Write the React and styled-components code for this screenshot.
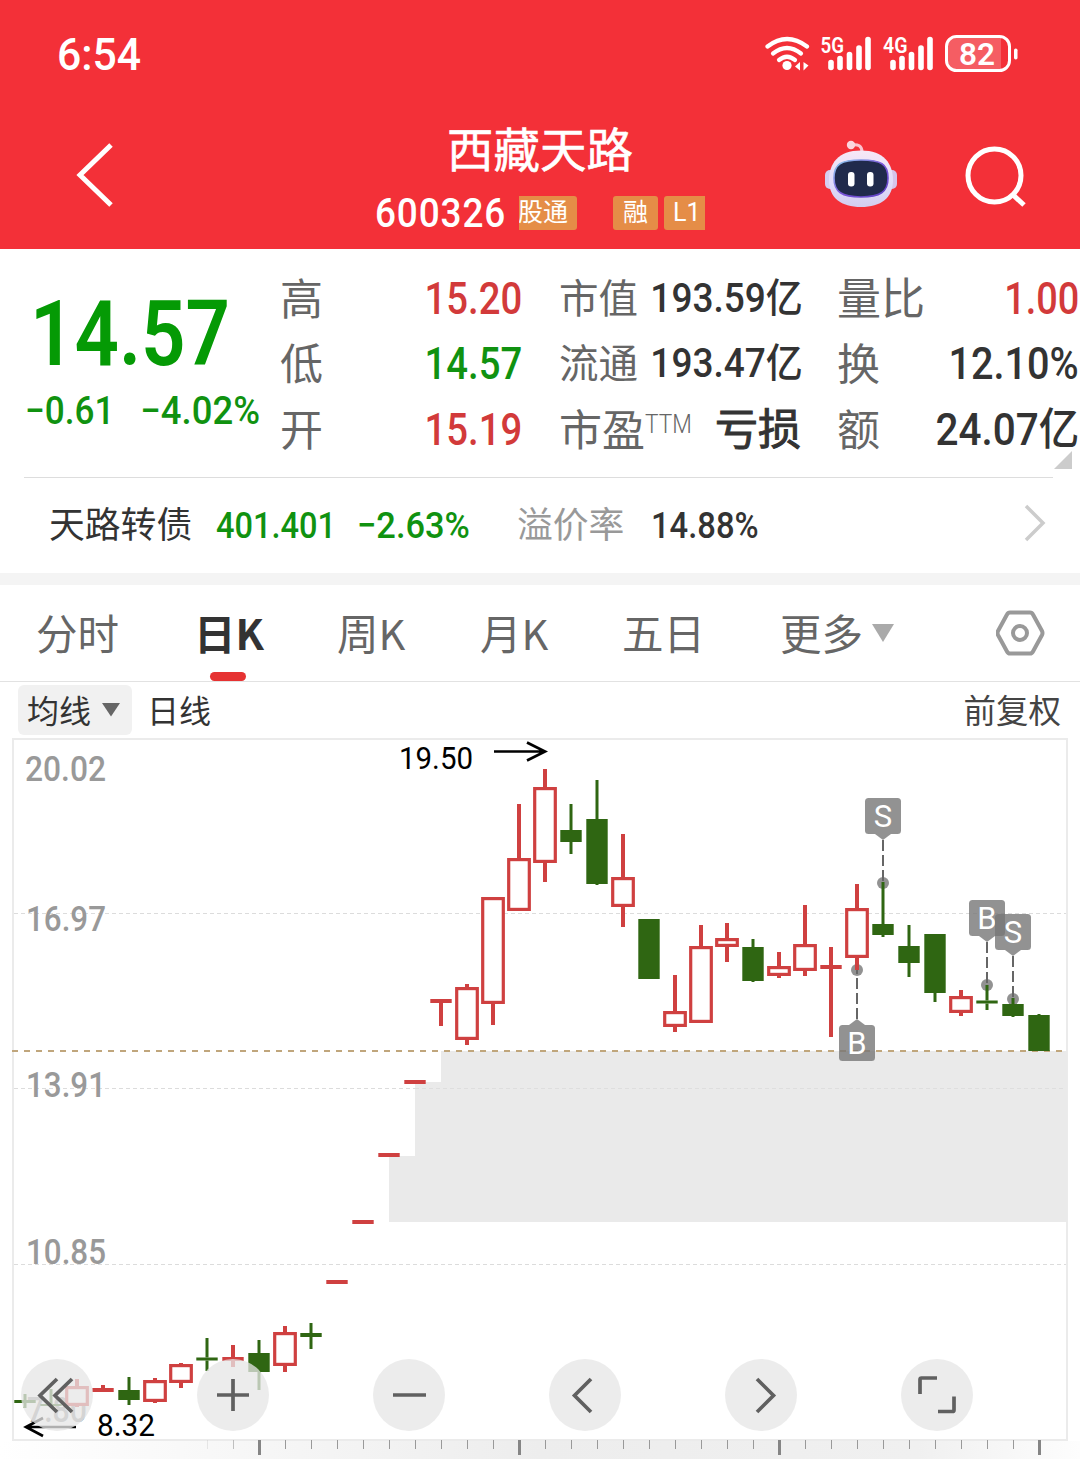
import styled, { createGlobalStyle } from "styled-components";

const GlobalStyle = createGlobalStyle`
  * {
    box-sizing: border-box;
  }

  body {
    margin: 0;
    background: #fff;
    font-family: Roboto, "Noto Sans CJK SC", sans-serif;
    color: #333;
  }
`;

const Page = styled.div`
  width: 1080px;
  height: 1459px;
  overflow: hidden;
  background: #fff;
`;

const Header = styled.header`
  height: 249px;
  background: #f33038;
  color: #fff;
`;

const StatusBar = styled.div`
  display: flex;
  align-items: center;
  justify-content: space-between;
  height: 108px;
  padding: 0 60px 0 57px;
`;

const Figure = styled.span`
  display: inline-block;
  font-family: Roboto, "Noto Sans CJK SC", sans-serif;
  font-size: ${(p) => p.$size}px;
  font-weight: ${(p) => p.$weight || 500};
  line-height: 1;
  color: ${(p) => p.$color || "inherit"};
  letter-spacing: ${(p) => p.$spacing || 0}px;
  white-space: nowrap;
  transform: scaleX(${(p) => p.$squeeze || 1});
  transform-origin: ${(p) => p.$origin || "left"} center;
`;

const TitleBar = styled.div`
  display: grid;
  grid-template-columns: 375px 330px 375px;
  height: 141px;
`;

const BackButton = styled.div`
  padding: 34px 0 0 75px;
`;

const TitleBlock = styled.div`
  display: flex;
  flex-direction: column;
  align-items: center;
`;

const StockName = styled.h1`
  margin: 16px 0 0;
  font-size: 46.5px;
  font-weight: 400;
  line-height: 54px;
  -webkit-text-stroke: 0.6px currentColor;
`;

const CodeRow = styled.div`
  display: flex;
  align-items: center;
  width: 330px;
  height: 34px;
  margin-top: 18px;
`;

const Code = styled.div`
  width: 144px;
`;

const Tag = styled.span`
  display: flex;
  align-items: center;
  justify-content: ${(p) => p.$align || "center"};
  width: ${(p) => p.$width}px;
  height: 34px;
  margin-right: ${(p) => p.$gap || 0}px;
  border-radius: ${(p) => p.$radius || "3px"};
  overflow: hidden;
  background: #e58d47;
  font-size: 25px;
  line-height: 34px;
  white-space: nowrap;
`;

const TagText = styled.span`
  margin-left: ${(p) => p.$shift || 0}px;
`;

const HeaderActions = styled.div`
  display: flex;
  gap: 66px;
  padding: 30px 0 0 119px;
`;

const Quote = styled.section`
  display: flex;
  height: 228px;
`;

const PricePanel = styled.div`
  width: 280px;
  padding: 41px 0 0 30px;
`;

const PriceMain = styled.div`
  height: 88px;
`;

const PriceChange = styled.div`
  display: flex;
  width: 235px;
  margin-top: 14px;
  margin-left: -5px;
  justify-content: space-between;
`;

const StatColumn = styled.div`
  display: flex;
  flex-direction: column;
  width: 242px;
  margin-right: ${(p) => p.$gap}px;
  padding-top: 17px;
`;

const StatRow = styled.div`
  display: flex;
  align-items: center;
  justify-content: space-between;
  height: 65.5px;
`;

const StatLabel = styled.span`
  padding-top: 2px;
  font-size: ${(p) => p.$size || 43}px;
  line-height: 58px;
  color: #666;
  white-space: nowrap;
`;

const Ttm = styled.sup`
  display: inline-block;
  width: 46px;
  font-size: 26px;
  font-weight: 300;
  line-height: 1;
  vertical-align: 13px;
  transform: scaleX(0.87);
  transform-origin: left;
`;

const StatText = styled.span`
  font-size: 43px;
  line-height: 60px;
  -webkit-text-stroke: 1px currentColor;
`;

const Divider = styled.div`
  position: relative;
  width: 1029px;
  height: 1px;
  margin-left: 24px;
  background: #ddd;
`;

const Corner = styled.svg`
  position: absolute;
  right: -19px;
  bottom: 9px;
`;

const BondRow = styled.section`
  display: flex;
  align-items: center;
  height: 95px;
  padding-left: 49px;
`;

const BondCell = styled.div`
  width: ${(p) => p.$width}px;
  flex: none;
  font-size: 35.8px;
  line-height: 50px;
  color: ${(p) => p.$color || "#333"};
  white-space: nowrap;
`;

const BondArrow = styled.svg`
  margin-bottom: 5px;
`;

const Band = styled.div`
  height: 12px;
  background: #f4f4f4;
`;

const Tabs = styled.nav`
  display: flex;
  height: 97px;
  padding-left: 36px;
  border-bottom: 1px solid #e2e2e2;
`;

const Tab = styled.div`
  position: relative;
  display: flex;
  align-items: center;
  width: ${(p) => p.$width}px;
  padding-bottom: 3px;
  font-family: "Noto Sans CJK SC", sans-serif;
  font-size: 41.5px;
  font-weight: ${(p) => (p.$active ? 700 : 400)};
  color: ${(p) => (p.$active ? "#333" : "#666")};
  white-space: nowrap;

  svg {
    margin-top: 2px;
    margin-left: 8px;
  }
`;

const TabIndicator = styled.span`
  position: absolute;
  left: 16px;
  bottom: 0;
  width: 36px;
  height: 9px;
  border-radius: 4.5px;
  background: #e63232;
`;

const ChartToolbar = styled.div`
  display: flex;
  align-items: center;
  height: 56px;
  padding: 0 19px 0 18px;
  font-size: 32px;
  line-height: 46px;
`;

const ToolbarText = styled.span`
  padding-top: 3px;
`;

const MaButton = styled.div`
  display: flex;
  align-items: center;
  gap: 11px;
  width: 114px;
  height: 50px;
  margin-right: 15px;
  padding-left: 9px;
  border-radius: 6px;
  background: #f1f1f1;
`;

const Adjust = styled(ToolbarText)`
  margin-left: auto;
  font-size: 32.5px;
  color: #444;
`;

const ChartArea = styled.div`
  position: relative;
  height: 721px;

  > svg {
    display: block;
  }
`;

const Controls = styled.div`
  position: absolute;
  left: 21px;
  top: 621px;
  display: flex;
  gap: 104px;
`;

const RoundButton = styled.div`
  width: 72px;
  height: 72px;
  border-radius: 50%;
  background: rgba(230, 230, 230, 0.76);
`;

const RED = "#cf4040";
const GREEN = "#2f6612";
const UP = "#d23a3a";
const DOWN = "#109210";

// [type, high, top, bottom, low], drawn every 26px from the left
const candles = [
  ["g", 1394, 1400, 1403, 1408],
  ["g", 1389, 1404, 1406, 1406],
  ["r", 1379, 1386, 1406, 1407],
  ["f", 1385, 1388, 1392, 1392],
  ["g", 1377, 1390, 1400, 1405],
  ["r", 1378, 1380, 1402, 1403],
  ["r", 1363, 1364, 1383, 1388],
  ["g", 1338, 1357.5, 1360.5, 1371],
  ["f", 1345, 1357, 1361, 1367],
  ["g", 1340, 1353, 1372, 1390],
  ["r", 1326, 1332, 1366, 1372],
  ["g", 1323, 1333, 1337, 1349],
  ["f", 1280, 1280, 1284, 1284],
  ["f", 1220, 1220, 1224, 1224],
  ["f", 1153, 1153, 1157, 1157],
  ["f", 1080, 1080, 1084, 1084],
  ["f", 999, 999, 1003, 1026],
  ["r", 984, 987, 1040, 1045],
  ["r", 897, 897, 1004, 1025],
  ["r", 804, 858, 911, 911],
  ["r", 769, 787, 863, 882],
  ["g", 804, 830, 842, 854],
  ["g", 780, 819, 884, 885],
  ["r", 834, 877, 907, 927],
  ["g", 919, 919, 979, 979],
  ["r", 975, 1011, 1027, 1032],
  ["r", 925, 946, 1023, 1023],
  ["r", 923, 938, 947, 962],
  ["g", 939, 947, 981, 982],
  ["r", 952, 966, 976, 978],
  ["r", 905, 944, 971, 976],
  ["f", 947, 965, 969, 1037],
  ["r", 884, 908, 958, 970],
  ["g", 882, 924, 935, 937],
  ["g", 925, 946, 963, 977],
  ["g", 934, 934, 993, 1002],
  ["r", 990, 996, 1013, 1016],
  ["g", 985, 1000.5, 1003.5, 1010],
  ["g", 998, 1004, 1016, 1017],
  ["g", 1014, 1015, 1051, 1051],
];

const trades = [
  { text: "S", x: 883, box: 798, dot: 883 },
  { text: "B", x: 857, box: 1025, dot: 970 },
  { text: "B", x: 987, box: 900, dot: 985 },
  { text: "S", x: 1013, box: 914, dot: 999 },
];

const priceLabels = [
  { text: "20.02", x: 25, y: 781, width: 81 },
  { text: "16.97", x: 26, y: 931, width: 80 },
  { text: "13.91", x: 26, y: 1097, width: 80 },
  { text: "10.85", x: 26, y: 1264, width: 80 },
  { text: "7.80", x: 27, y: 1422, width: 60 },
];

const Candle = ({ x, type, high, top, bottom, low }) => {
  const color = type === "g" ? GREEN : RED;
  const wick = type === "g" ? 3 : 4;
  return (
    <g>
      {high < top && (
        <rect x={x - wick / 2} y={high} width={wick} height={top - high} fill={color} />
      )}
      {low > bottom && (
        <rect x={x - wick / 2} y={bottom} width={wick} height={low - bottom} fill={color} />
      )}
      {type === "r" ? (
        <rect
          x={x - 10.3}
          y={top + 1.6}
          width="20.6"
          height={bottom - top - 3.2}
          fill="#fff"
          stroke={color}
          strokeWidth="3.2"
        />
      ) : (
        <rect x={x - 10.7} y={top} width="21.4" height={bottom - top} fill={color} />
      )}
    </g>
  );
};

const Trade = ({ text, x, box, dot }) => {
  const above = box < dot;
  const edge = above ? box + 36 : box;
  const tip = above ? edge + 6 : edge - 6;
  return (
    <g>
      <circle cx={x} cy={dot} r="6" fill="#777" fillOpacity="0.8" />
      <line x1={x} y1={tip} x2={x} y2={dot} stroke="#666" strokeWidth="2" strokeDasharray="11 4" />
      <g fill="#777" fillOpacity="0.8">
        <rect x={x - 18} y={box} width="36" height="36" rx="3.5" />
        <path d={`M${x - 8} ${edge}L${x} ${tip}L${x + 8} ${edge}Z`} />
      </g>
      <text x={x} y={box + 29} textAnchor="middle" fontSize="31" fill="#fff">
        {text}
      </text>
    </g>
  );
};

const Chart = () => (
  <svg width="1080" height="721" viewBox="0 738 1080 721" fontFamily="Roboto, sans-serif">
    <defs>
      <linearGradient id="ruler" x1="0" x2="1">
        <stop offset="0" stopColor="#fff" />
        <stop offset="0.5" stopColor="#ededed" />
        <stop offset="0.85" stopColor="#f0f0f0" />
        <stop offset="1" stopColor="#fdfdfd" />
      </linearGradient>
    </defs>
    <rect x="13" y="739" width="1054" height="701" fill="none" stroke="#ebebeb" strokeWidth="2" />
    {[913.5, 1088.5, 1264.5].map((y) => (
      <line key={y} x1="14" y1={y} x2="1066" y2={y} stroke="#dcdcdc" strokeDasharray="4 3" />
    ))}
    <path d="M441 1051H1067V1222H389V1156H415V1082H441Z" fill="#eaeaea" />
    <line x1="415" y1="1088.5" x2="1066" y2="1088.5" stroke="#dedede" strokeDasharray="4 3" />
    <line x1="12" y1="1051" x2="1066" y2="1051" stroke="#c0a67c" strokeWidth="2" strokeDasharray="6 6" />
    {priceLabels.map((l) => (
      <text
        key={l.text}
        x={l.x}
        y={l.y}
        textLength={l.width}
        lengthAdjust="spacingAndGlyphs"
        fontSize="35"
        fontWeight="500"
        fill="#999"
      >
        {l.text}
      </text>
    ))}
    {trades.map((t) => (
      <Trade key={t.x} {...t} />
    ))}
    {candles.map(([type, high, top, bottom, low], i) => (
      <Candle key={i} x={25 + i * 26} type={type} high={high} top={top} bottom={bottom} low={low} />
    ))}
    <g fontSize="31" fill="#000">
      <text x="399" y="769" textLength="74" lengthAdjust="spacingAndGlyphs">
        19.50
      </text>
      <text x="97" y="1436" textLength="58" lengthAdjust="spacingAndGlyphs">
        8.32
      </text>
    </g>
    <g fill="none" stroke="#000" strokeWidth="2.7">
      <path d="M494 751.5H545M527 742.5L545 751.5L527 760.5" />
      <path d="M76 1427H26M43 1418L26 1427L43 1436" />
    </g>
    <rect x="0" y="1441" width="1080" height="18" fill="url(#ruler)" />
    {Array.from({ length: 33 }, (_, i) => {
      const x = 207 + i * 26;
      const major = (x - 259) % 260 === 0;
      return (
        <rect
          key={x}
          x={major ? x - 1 : x}
          y="1440"
          width={major ? 3 : 1}
          height={major ? 15 : 9}
          fill={major ? "#858585" : "#999"}
          opacity={i === 0 ? 0.2 : i === 1 ? 0.6 : 1}
        />
      );
    })}
  </svg>
);

const StatusIcons = () => (
  <svg width="280" height="50" viewBox="740 29 280 50" fill="none" stroke="#fff" fontFamily="Roboto, sans-serif">
    <g strokeWidth="4.2" strokeLinecap="round">
      <path d="M767.5 46.5Q787 31.5 807 46.5" />
      <path d="M773 53.5Q787 42.5 801 53.5" />
      <path d="M779 60Q787 53.5 795 60" />
    </g>
    <circle cx="787" cy="65.500" r="4.6" fill="#fff" stroke="none" />
    <path d="M800 62V70.5L795 66.5ZM803.5 62V70.5L808.5 65.5Z" fill="#fff" stroke="none" />
    {[831, 893].map((x) => (
      <g key={x} strokeWidth="5.6" strokeLinecap="round">
        <path d={`M${x} 62.5V67.5`} />
        <path d={`M${x + 9} 58.5V67.5`} />
        <path d={`M${x + 18.5} 54.5V67.5`} />
        <path d={`M${x + 28} 48V67.5`} />
        <path d={`M${x + 37} 39.5V67.5`} />
      </g>
    ))}
    <g fill="#fff" stroke="none" fontSize="22" fontWeight="600">
      <text x="820.5" y="53" textLength="23.5" lengthAdjust="spacingAndGlyphs">
        5G
      </text>
      <text x="883" y="53" textLength="24.5" lengthAdjust="spacingAndGlyphs">
        4G
      </text>
    </g>
    <path d="M956 38H1001V69H956Q948 69 948 60V47Q948 38 956 38Z" fill="#fff" fillOpacity="0.22" stroke="none" />
    <rect x="946.5" y="36.5" width="63" height="34" rx="10" strokeWidth="3" />
    <rect x="1014" y="48.5" width="3.5" height="11" rx="1.7" fill="#fff" stroke="none" />
    <text x="959" y="65" textLength="36" lengthAdjust="spacingAndGlyphs" fontSize="32" fontWeight="600" fill="#fff" stroke="none">
      82
    </text>
  </svg>
);

const Robot = () => (
  <svg width="74" height="72" viewBox="824 138 74 72">
    <defs>
      <linearGradient id="shell" x1="0" y1="0" x2="0" y2="1">
        <stop offset="0" stopColor="#f7e8f6" />
        <stop offset="0.6" stopColor="#e0dcfa" />
        <stop offset="1" stopColor="#d3cdee" />
      </linearGradient>
      <linearGradient id="rim" x1="0" y1="0" x2="1" y2="1">
        <stop offset="0" stopColor="#8fd3f0" />
        <stop offset="0.5" stopColor="#7b55d8" />
        <stop offset="1" stopColor="#5b3fc0" />
      </linearGradient>
    </defs>
    <path d="M851 145Q862 143 862 152" fill="none" stroke="#fbc3cf" strokeWidth="3" />
    <circle cx="851" cy="145" r="4.2" fill="#fbd5de" />
    <rect x="825" y="170" width="12" height="19" rx="5" fill="#d6cdf0" />
    <rect x="885" y="170" width="12" height="19" rx="5" fill="#d6c4ea" />
    <path d="M861 150.5C884 150.5 893 164 893 180C893 198 881 207 861 207C841 207 829 198 829 180C829 164 838 150.5 861 150.5Z" fill="url(#shell)" />
    <path d="M861 160C881 160 888 164 888 178C888 192 880 197 861 197C842 197 834 192 834 178C834 164 841 160 861 160Z" fill="#202a4b" stroke="url(#rim)" strokeWidth="1.6" />
    <rect x="848" y="172" width="6.5" height="14.5" rx="3" fill="#fff" />
    <rect x="867" y="172" width="6.5" height="14.5" rx="3" fill="#fff" />
  </svg>
);

const controlPaths = [
  "M36 20L19 36.5L36 53M51 20L34 36.5L51 53",
  "M20 36H52M36 20V52",
  "M20 36H53",
  "M42 20L25.5 36.5L42 53",
  "M32 20L48.5 36.5L32 53",
  "M19 35V20.5Q19 19 20.500 19H36M53 37.5V51Q53 52.500 51.500 52.500H37",
];

const periods = [
  { label: "分时", width: 158 },
  { label: "日K", width: 143, active: true },
  { label: "周K", width: 143 },
  { label: "月K", width: 142 },
  { label: "五日", width: 158 },
  { label: "更多", width: 216, menu: true },
];

const App = () => {
  return (
    <Page>
      <GlobalStyle />
      <Header>
        <StatusBar>
          <Figure $size={45} $squeeze={0.95}>6:54</Figure>
          <StatusIcons />
        </StatusBar>
        <TitleBar>
          <BackButton>
            <svg width="40" height="66" fill="none" stroke="#fff" strokeWidth="5">
              <path d="M36 3L5 33L36 63" />
            </svg>
          </BackButton>
          <TitleBlock>
            <StockName>西藏天路</StockName>
            <CodeRow>
              <Code>
                <Figure $size={41} $squeeze={0.9} $spacing={1}>600326</Figure>
              </Code>
              <Tag $width={58} $gap={36} $align="flex-start" $radius="0 3px 3px 0">
                <TagText $shift={-1}>股通</TagText>
              </Tag>
              <Tag $width={45} $gap={6}>融</Tag>
              <Tag $width={41} $align="flex-start" $radius="3px 0 0 3px">
                <TagText $shift={9}>L1</TagText>
              </Tag>
            </CodeRow>
          </TitleBlock>
          <HeaderActions>
            <Robot />
            <svg width="64" height="70" viewBox="964 138 64 70" fill="none" stroke="#fff" strokeWidth="5">
              <circle cx="994.5" cy="175.5" r="26.5" />
              <path d="M1012 194L1024 205" />
            </svg>
          </HeaderActions>
        </TitleBar>
      </Header>

      <Quote>
        <PricePanel>
          <PriceMain>
            <Figure $size={90} $weight={600} $squeeze={0.865} $color="#059a05">14.57</Figure>
          </PriceMain>
          <PriceChange>
            <Figure $size={39} $squeeze={0.9} $color={DOWN}>−0.61</Figure>
            <Figure $size={39} $squeeze={0.935} $origin="right" $color={DOWN}>−4.02%</Figure>
          </PriceChange>
        </PricePanel>
        <StatColumn $gap={37}>
          <StatRow>
            <StatLabel>高</StatLabel>
            <Figure $size={44} $squeeze={0.87} $origin="right" $color={UP}>15.20</Figure>
          </StatRow>
          <StatRow>
            <StatLabel>低</StatLabel>
            <Figure $size={44} $squeeze={0.87} $origin="right" $color={DOWN}>14.57</Figure>
          </StatRow>
          <StatRow>
            <StatLabel>开</StatLabel>
            <Figure $size={44} $squeeze={0.87} $origin="right" $color={UP}>15.19</Figure>
          </StatRow>
        </StatColumn>
        <StatColumn $gap={36}>
          <StatRow>
            <StatLabel $size={39.5}>市值</StatLabel>
            <Figure $size={40} $squeeze={0.925} $origin="right">193.59亿</Figure>
          </StatRow>
          <StatRow>
            <StatLabel $size={39.5}>流通</StatLabel>
            <Figure $size={40} $squeeze={0.925} $origin="right">193.47亿</Figure>
          </StatRow>
          <StatRow>
            <StatLabel>
              市盈<Ttm>TTM</Ttm>
            </StatLabel>
            <StatText>亏损</StatText>
          </StatRow>
        </StatColumn>
        <StatColumn $gap={0}>
          <StatRow>
            <StatLabel $size={44}>量比</StatLabel>
            <Figure $size={44} $squeeze={0.86} $origin="right" $color={UP}>1.00</Figure>
          </StatRow>
          <StatRow>
            <StatLabel>换</StatLabel>
            <Figure $size={44} $squeeze={0.9} $origin="right">12.10%</Figure>
          </StatRow>
          <StatRow>
            <StatLabel>额</StatLabel>
            <Figure $size={44} $squeeze={0.92} $origin="right">24.07亿</Figure>
          </StatRow>
        </StatColumn>
      </Quote>
      <Divider>
        <Corner width="18" height="18">
          <path d="M18 0V18H0Z" fill="#ccc" />
        </Corner>
      </Divider>

      <BondRow>
        <BondCell $width={167}>天路转债</BondCell>
        <BondCell $width={141}>
          <Figure $size={37} $squeeze={0.88} $color={DOWN}>401.401</Figure>
        </BondCell>
        <BondCell $width={160}>
          <Figure $size={37} $squeeze={0.93} $color={DOWN}>−2.63%</Figure>
        </BondCell>
        <BondCell $width={134} $color="#999">溢价率</BondCell>
        <BondCell $width={373}>
          <Figure $size={37} $squeeze={0.885}>14.88%</Figure>
        </BondCell>
        <BondArrow width="24" height="40" fill="none" stroke="#ccc" strokeWidth="3.5">
          <path d="M2 3L19 20L2 37" />
        </BondArrow>
      </BondRow>
      <Band />

      <Tabs>
        {periods.map((p) => (
          <Tab key={p.label} $width={p.width} $active={p.active}>
            {p.label}
            {p.active && <TabIndicator />}
            {p.menu && (
              <svg width="24" height="20">
                <path d="M1 1H23L12 19Z" fill="#aaa" />
              </svg>
            )}
          </Tab>
        ))}
        <svg width="50" height="97" viewBox="996 585 50 97" fill="none" stroke="#999">
          <path
            d="M1010 612.5H1030Q1032 612.5 1033 614.5L1042 631Q1043 633 1042 635L1033 651.5Q1032 653.5 1030 653.5H1010Q1008 653.5 1007 651.5L998 635Q997 633 998 631L1007 614.5Q1008 612.5 1010 612.5Z"
            strokeWidth="4"
          />
          <circle cx="1020" cy="633" r="7" strokeWidth="4" />
        </svg>
      </Tabs>

      <ChartToolbar>
        <MaButton>
          <ToolbarText>均线</ToolbarText>
          <svg width="18" height="14">
            <path d="M0 0H18L9 13.5Z" fill="#666" />
          </svg>
        </MaButton>
        <ToolbarText>日线</ToolbarText>
        <Adjust>前复权</Adjust>
      </ChartToolbar>

      <ChartArea>
        <Chart />
        <Controls>
          {controlPaths.map((d) => (
            <RoundButton key={d}>
              <svg width="72" height="72" fill="none" stroke="#606060" strokeWidth="3.7">
                <path d={d} />
              </svg>
            </RoundButton>
          ))}
        </Controls>
      </ChartArea>
    </Page>
  );
};

export default App;
